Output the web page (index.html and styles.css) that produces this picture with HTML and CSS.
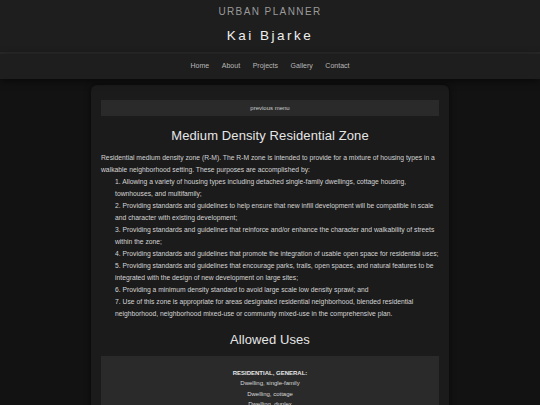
FILE: index.html
```html
<!DOCTYPE html>
<html lang="en">
<head>
<meta charset="utf-8">
<title>Kai Bjarke - Urban Planner</title>
<link rel="stylesheet" href="styles.css">
</head>
<body>
<header class="site-header">
  <div class="role">URBAN PLANNER</div>
  <h1 class="name">Kai Bjarke</h1>
</header>
<nav class="site-nav">
  <a href="#">Home</a>
  <a href="#">About</a>
  <a href="#">Projects</a>
  <a href="#">Gallery</a>
  <a href="#">Contact</a>
</nav>
<main class="card">
  <div class="prev-bar">previous menu</div>
  <h2 class="title">Medium Density Residential Zone</h2>
  <div class="text">
    <p class="intro">Residential medium density zone (R-M). The R-M zone is intended to provide for a mixture of housing types in a walkable neighborhood setting. These purposes are accomplished by:</p>
    <p class="item">1. Allowing a variety of housing types including detached single-family dwellings, cottage housing, townhouses, and multifamily;</p>
    <p class="item">2. Providing standards and guidelines to help ensure that new infill development will be compatible in scale and character with existing development;</p>
    <p class="item">3. Providing standards and guidelines that reinforce and/or enhance the character and walkability of streets within the zone;</p>
    <p class="item">4. Providing standards and guidelines that promote the integration of usable open space for residential uses;</p>
    <p class="item">5. Providing standards and guidelines that encourage parks, trails, open spaces, and natural features to be integrated with the design of new development on large sites;</p>
    <p class="item">6. Providing a minimum density standard to avoid large scale low density sprawl; and</p>
    <p class="item">7. Use of this zone is appropriate for areas designated residential neighborhood, blended residential neighborhood, neighborhood mixed-use or community mixed-use in the comprehensive plan.</p>
  </div>
  <h2 class="title title-uses">Allowed Uses</h2>
  <div class="uses">
    <div class="uses-head">RESIDENTIAL, GENERAL:</div>
    <div>Dwelling, single-family</div>
    <div>Dwelling, cottage</div>
    <div>Dwelling, duplex</div>
    <div>Dwelling, townhouse</div>
    <div>Dwelling, multifamily</div>
  </div>
</main>
</body>
</html>
```

FILE: styles.css
```css
html, body {
  margin: 0;
  padding: 0;
}
body {
  background: #121212;
  font-family: "Liberation Sans", Arial, sans-serif;
  color: #d2d2d2;
  overflow: hidden;
  height: 405px;
}
.site-header {
  background: #1e1e1e;
  text-align: center;
  border-bottom: 2px solid #2a2a2a;
  box-sizing: border-box;
  height: 54px;
  padding-top: 6px;
}
.role {
  font-size: 10px;
  letter-spacing: 1.4px;
  color: #9a9a9a;
  line-height: 12px;
}
.name {
  margin: 10px 0 0;
  font-size: 13.5px;
  font-weight: normal;
  letter-spacing: 2.5px;
  color: #eeeeee;
  line-height: 16px;
}
.site-nav {
  background: #1e1e1e;
  height: 25px;
  padding-bottom: 2px;
  box-sizing: border-box;
  display: flex;
  justify-content: center;
  align-items: center;
  gap: 12.6px;
  box-shadow: 0 2px 8px rgba(0, 0, 0, 0.55);
  position: relative;
}
.site-nav a {
  color: #b8b8b8;
  text-decoration: none;
  font-size: 7px;
  line-height: 10px;
}
.card {
  width: 358px;
  box-sizing: border-box;
  margin: 6px auto 0;
  background: #1b1b1b;
  border-radius: 6px;
  box-shadow: 0 0 6px rgba(0, 0, 0, 0.6);
  padding: 15px 10px 20px;
}
.prev-bar {
  background: #2a2a2a;
  height: 16px;
  line-height: 16px;
  text-align: center;
  font-size: 6px;
  color: #cccccc;
}
.title {
  margin: 12px 0 0;
  font-size: 13px;
  font-weight: normal;
  line-height: 15px;
  text-align: center;
  color: #e6e6e6;
  letter-spacing: 0.1px;
}
.text {
  margin-top: 9px;
  font-size: 6.75px;
  line-height: 12px;
  color: #d4d4d4;
}
.text p {
  margin: 0;
}
.text .item {
  padding-left: 14px;
}
.title-uses {
  margin-top: 12px;
}
.uses {
  margin-top: 9px;
  background: #2a2a2a;
  padding: 12px 0 10px;
  text-align: center;
  font-size: 6px;
  line-height: 10.4px;
  color: #d8d8d8;
}
.uses-head {
  font-weight: bold;
  color: #e6e6e6;
}
```
